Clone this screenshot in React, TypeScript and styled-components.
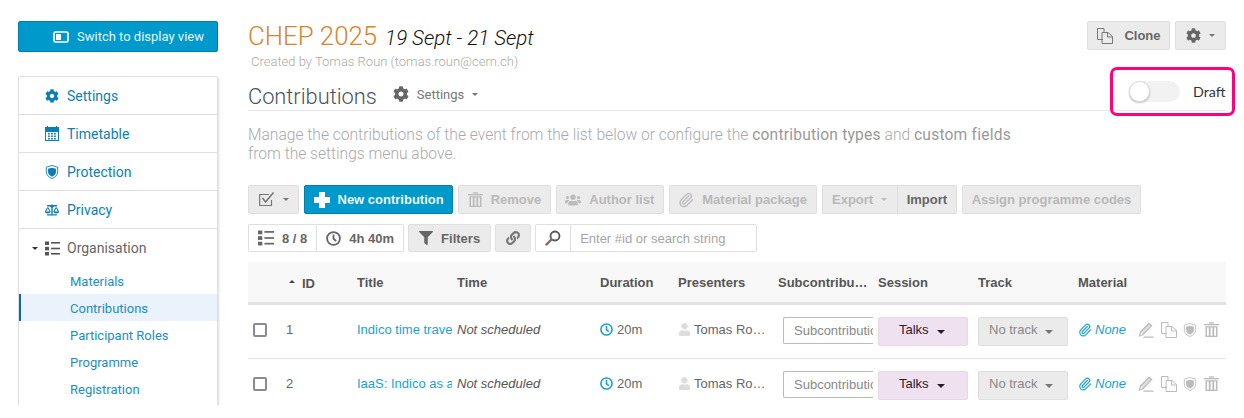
import React from "react";
import styled, { createGlobalStyle } from "styled-components";
import { FaBalanceScale, FaCog, FaFilter, FaLink, FaUser, FaUsers } from "react-icons/fa";

const GlobalStyle = createGlobalStyle`
  html, body {
    margin: 0;
    padding: 0;
    background: #fff;
    font-family: "Liberation Sans", Arial, sans-serif;
  }
`;

const BLUE = "#0b7fb5";
const LINK = "#1a9fd6";

function ShieldIcon({ size = 14, color = "currentColor" }: { size?: number; color?: string }) {
  return (
    <svg width={size} height={size} viewBox="0 0 16 16">
      <path d="M8 .5 14.500 2.500V8c0 3.600-3 6-6.500 7.500C4.500 14 1.500 11.600 1.500 8V2.500Z" fill="none" stroke={color} strokeWidth="1" />
      <path d="M8 3 12.500 4.300V8C12.500 10.500 10.500 12.200 8 13.300 5.500 12.200 3.500 10.500 3.500 8V4.300Z" fill={color} />
    </svg>
  );
}

function CalendarIcon() {
  return (
    <svg width="14" height="15" viewBox="0 0 14 15" fill={BLUE}>
      <path d="M0 1h2V0h1v1h8V0h1v1h2v14H0Zm1 5v8h12V6Z" />
      {[3, 6, 9].map((x) =>
        [7, 9.5, 12].map((y) => <rect key={`${x}-${y}`} x={x} y={y} width="1.800" height="1.500" />),
      )}
    </svg>
  );
}

function ListIcon({ size = 15, color = "#555" }: { size?: number; color?: string }) {
  return (
    <svg width={size} height={size} viewBox="0 0 15 15" fill={color}>
      <rect x="0" y="0.500" width="4" height="3.500" />
      <rect x="0" y="5.800" width="4" height="3.500" />
      <rect x="0" y="11" width="4" height="3.500" />
      <rect x="6" y="1" width="9" height="1.600" />
      <rect x="6" y="6.700" width="9" height="1.600" />
      <rect x="6" y="12" width="9" height="1.600" />
    </svg>
  );
}

function DisplayIcon() {
  return (
    <svg width="16" height="12" viewBox="0 0 16 12">
      <rect x="1" y="1" width="14" height="10" rx="1.500" fill="none" stroke="#fff" strokeWidth="1.700" />
      <rect x="3" y="3" width="5" height="6" fill="#fff" />
    </svg>
  );
}

function CopyIcon({ size = 16, color = "#777" }: { size?: number; color?: string }) {
  return (
    <svg width={size} height={size} viewBox="0 0 16 16" fill="none" stroke={color} strokeWidth="1">
      <path d="M6 11.500H.5V.5H7V4" />
      <path d="M5 4.500H11L15.500 8.500V15.500H5Z" />
      <path d="M10.500 4.500V9H15.500" />
    </svg>
  );
}

function TrashIcon({ size = 15, color = "#bbb" }: { size?: number; color?: string }) {
  return (
    <svg width={size} height={size} viewBox="0 0 15 15" fill={color}>
      <rect x="0" y="2" width="15" height="1.300" />
      <rect x="5" y="0.300" width="5" height="1.300" />
      <path d="M1.500 4.300h12V15h-12Zm1.500 1.200v8.300h1.800V5.500Zm3.600 0v8.300h1.800V5.500Zm3.600 0v8.300H12V5.500Z" fillRule="evenodd" />
    </svg>
  );
}

function ClockIcon({ size = 13, color = "#555" }: { size?: number; color?: string }) {
  return (
    <svg width={size} height={size} viewBox="0 0 14 14" fill="none" stroke={color} strokeWidth="1.700">
      <circle cx="7" cy="7" r="6" />
      <path d="M7 3.300V7.300L9.500 9.300" />
    </svg>
  );
}

function ClipIcon({ size = 14, color = "#bbb" }: { size?: number; color?: string }) {
  return (
    <svg width={size} height={size} viewBox="0 0 24 24" fill="none" stroke={color} strokeWidth="2" strokeLinecap="round" strokeLinejoin="round">
      <path d="m16 6-8.414 8.586a2 2 0 0 0 2.829 2.829l8.414-8.586a4 4 0 1 0-5.657-5.657l-8.379 8.551a6 6 0 1 0 8.485 8.485l8.379-8.551" />
    </svg>
  );
}

function EditIcon() {
  return (
    <svg width="17" height="16" viewBox="0 0 16 16" fill="#bbb">
      <path d="M11.500.5 15 3.500 6 13 1 15l1.500-5.500Zm0 1.800L3.600 10.200 2.800 13.200 5.400 12 13.300 3.700Z" fillRule="evenodd" />
      <path d="M7 14.500H16V15.700H5Z" />
      <path d="M3 10 11.500 1.500 14 3.500 5.500 12.500Z" opacity="0.500" />
    </svg>
  );
}

function SearchIcon() {
  return (
    <svg width="16" height="16" viewBox="0 0 16 16" fill="none">
      <circle cx="10" cy="6" r="4.500" stroke="#555" strokeWidth="1.800" />
      <path d="M6.500 9.500 1.500 14.500" stroke="#7a6a55" strokeWidth="2.400" strokeLinecap="round" />
    </svg>
  );
}

function CheckboxIcon() {
  return (
    <svg width="16" height="15" viewBox="0 0 16 15" fill="none" stroke="#777" strokeWidth="1.200">
      <path d="M12.500 8V13.500H.7V2.500H10" />
      <path d="M3.500 6 6.500 10 14.500 .5" strokeWidth="1.600" />
    </svg>
  );
}

const Page = styled.div`
  box-sizing: border-box;
  display: flex;
  gap: 30px;
  width: 1244px;
  height: 405px;
  padding: 21px 18px 0;
  overflow: hidden;
`;

const Sidebar = styled.aside`
  display: flex;
  flex-direction: column;
  flex: 0 0 200px;
  gap: 24px;

  & > * {
    flex-shrink: 0;
  }
`;

const SwitchButton = styled.div`
  box-sizing: border-box;
  display: flex;
  align-items: center;
  gap: 8px;
  height: 31px;
  padding-left: 34px;
  background: #0099cc;
  border: 1px solid #007fa9;
  border-radius: 2px;
  color: #e4f4fa;
  font: 13px Roboto, sans-serif;
`;

const Menu = styled.nav`
  border: 1px solid #dfdfdf;
  border-radius: 2px 2px 0 0;
  box-shadow: 1px 1px 2px #ddd;
  padding-bottom: 30px;
`;

const MenuItem = styled.div<{ $dark?: boolean }>`
  box-sizing: border-box;
  display: flex;
  align-items: center;
  gap: ${({ $dark }) => ($dark ? "7px" : "8px")};
  height: 38px;
  padding-left: 26px;
  border-bottom: ${({ $dark }) => ($dark ? "none" : "1px solid #dfdfdf")};
  color: ${({ $dark }) => ($dark ? "#666" : BLUE)};
  font: 14px Roboto, sans-serif;
`;

const Caret = styled.span<{ $color?: string; $size?: number }>`
  display: inline-block;
  width: 0;
  height: 0;
  border-left: ${({ $size = 3 }) => $size}px solid transparent;
  border-right: ${({ $size = 3 }) => $size}px solid transparent;
  border-top: ${({ $size = 3 }) => $size}px solid ${({ $color = "#333" }) => $color};
`;

const OrganisationCaret = styled(Caret)`
  margin-left: -13px;
`;

const SubItem = styled.div<{ $active?: boolean }>`
  box-sizing: border-box;
  display: flex;
  align-items: center;
  height: 27px;
  padding: 1px 0 0 ${({ $active }) => ($active ? "49px" : "51px")};
  background: ${({ $active }) => ($active ? "#eaf2fb" : "transparent")};
  border-left: ${({ $active }) => ($active ? "2px solid #0b6aa8" : "none")};
  color: #1a8fc4;
  font: 13px Roboto, sans-serif;
`;

const Main = styled.main`
  position: relative;
  flex: 0 0 978px;
  display: flex;
  flex-direction: column;

  & > * {
    flex-shrink: 0;
  }
`;

const TitleRow = styled.div`
  display: flex;
  justify-content: space-between;
`;

const EventTitle = styled.h1`
  margin: 0;
  font: 300 25.800px/31px Roboto, sans-serif;
  color: #d9832b;
`;

const EventDates = styled.em`
  margin-left: 8px;
  font: italic 300 20.500px Roboto, sans-serif;
  color: #111;
`;

const CreatedBy = styled.div`
  margin: 3px 0 0 3px;
  font: 300 13px/14px Roboto, sans-serif;
  color: #aaa;
`;

const TopActions = styled.div`
  display: flex;
  gap: 5px;
  height: 29px;
`;

const Button = styled.div<{ $muted?: boolean; $white?: boolean; $height?: number; $pad?: number }>`
  box-sizing: border-box;
  display: flex;
  align-items: center;
  gap: 8px;
  height: ${({ $height = 29 }) => $height}px;
  padding: 0 ${({ $pad = 8.5 }) => $pad}px;
  background: ${({ $white }) => ($white ? "#fff" : "#ebebeb")};
  border: 1px solid #dfdfdf;
  border-radius: 2px;
  color: ${({ $muted }) => ($muted ? "#b8b8b8" : "#666")};
  font: bold 13px "Liberation Sans", sans-serif;
  white-space: nowrap;
`;

const PrimaryButton = styled(Button)`
  background: #0099cc;
  border-color: #007fa9;
  color: #eaf7fb;
`;

const Joined = styled.div`
  display: flex;

  & > *:first-child {
    border-radius: 2px 0 0 2px;
    border-right: none;
  }
  & > *:last-child {
    border-radius: 0 2px 2px 0;
  }
`;

const SectionHeader = styled.div`
  box-sizing: border-box;
  display: flex;
  align-items: center;
  height: 33px;
  margin-top: 9px;
  padding-top: 5px;
  border-bottom: 1px solid #e8e8e8;
`;

const SectionTitle = styled.h2`
  margin: 0;
  font: 300 21.800px/27px Roboto, sans-serif;
  color: #4a5260;
`;

const SectionSettings = styled.div`
  display: flex;
  align-items: center;
  gap: 8px;
  margin: -5px 0 0 16px;
  font: 13px Roboto, sans-serif;
  color: #777;
`;

const DraftOverlay = styled.div`
  position: absolute;
  top: 46px;
  left: 862px;
  box-sizing: border-box;
  display: flex;
  align-items: center;
  gap: 13px;
  width: 125px;
  height: 49px;
  padding-left: 15px;
  border: 3px solid #ff0080;
  border-radius: 7px;
  font: 14.300px Lato, sans-serif;
  color: #333;
`;

const Toggle = styled.div`
  position: relative;
  flex: 0 0 51px;
  height: 21px;
  margin-left: 1px;
  border-radius: 11px;
  background: #f2f2f2;
`;

const ToggleKnob = styled.div`
  position: absolute;
  top: 0;
  left: 0;
  box-sizing: border-box;
  width: 21px;
  height: 21px;
  border-radius: 50%;
  background: #fff;
  border: 1px solid #ddd;
  box-shadow: 0 1px 2px #bbb;
`;

const Intro = styled.p`
  width: 770px;
  margin: 15px 0 0;
  font: 300 15.600px/19px Roboto, sans-serif;
  color: #a9a9ae;

  strong {
    font-weight: 400;
    letter-spacing: 0.2px;
    color: #999;
  }
`;

const Toolbar = styled.div`
  display: flex;
  gap: 5px;
  margin-top: 21px;
`;

const FilterBar = styled(Toolbar)`
  gap: 4px;
  margin-top: 10px;
`;

const SearchBox = styled.div`
  box-sizing: border-box;
  display: flex;
  width: 222px;
  height: 28px;
  border: 1px solid #dfdfdf;
  border-radius: 2px;
`;

const SearchAddon = styled.div`
  display: flex;
  align-items: center;
  justify-content: center;
  width: 34px;
  border-right: 1px solid #dfdfdf;
`;

const SearchHint = styled.div`
  display: flex;
  align-items: center;
  padding-left: 9px;
  font: 13px "Liberation Sans", sans-serif;
  color: #a5a5a5;
`;

const COLUMNS = "30px 79px 100px 143px 78px 100px 100px 100px 100px 148px";

const HeadRow = styled.div`
  box-sizing: border-box;
  display: grid;
  grid-template-columns: ${COLUMNS};
  align-items: center;
  height: 43px;
  margin-top: 10px;
  background: #f8f8f8;
  border-bottom: 3px solid #e2e2e2;
  font: bold 13px "Liberation Sans", sans-serif;
  color: #555;
`;

const SortCell = styled.div`
  display: flex;
  align-items: center;
  gap: 7px;
  padding: 2px 0 0 11px;
`;

const SortCaret = styled.span`
  width: 0;
  height: 0;
  margin-top: -3px;
  border-left: 3px solid transparent;
  border-right: 3px solid transparent;
  border-bottom: 3px solid #444;
`;

const Row = styled.div`
  box-sizing: border-box;
  display: grid;
  grid-template-columns: ${COLUMNS};
  align-items: center;
  height: 54px;
  padding-bottom: 4px;
  border-bottom: 1px solid #e2e2e2;
  font: 13px "Liberation Sans", sans-serif;
  color: #666;
`;

const CheckCell = styled.div`
  padding-left: 5px;
  display: flex;
`;

const Check = styled.span`
  box-sizing: border-box;
  width: 14px;
  height: 14px;
  background: #fff;
  border: 2px solid #8a8a98;
  border-radius: 2px;
`;

const IdCell = styled.div`
  padding-left: 8px;
`;

const TitleCell = styled.div`
  width: 95px;
  overflow: hidden;
  white-space: nowrap;
  color: ${LINK};
`;

const Unscheduled = styled.div`
  font-style: italic;
  white-space: nowrap;
  color: #555;
`;

const InlineCell = styled.div`
  display: flex;
  align-items: center;
  gap: 4px;
  white-space: nowrap;
`;

const PresenterCell = styled(InlineCell)`
  gap: 3px;
`;

const SubInput = styled.div`
  box-sizing: border-box;
  width: 90px;
  height: 27px;
  margin: 2px 0 0 5px;
  padding: 5px 0 0 10px;
  overflow: hidden;
  white-space: nowrap;
  background: #fff;
  border: 1px solid #bbb;
  border-right: none;
  border-radius: 2px 0 0 2px;
  font-size: 13px;
  color: #888;
`;

const Select = styled.div<{ $bg: string; $color: string }>`
  box-sizing: border-box;
  display: flex;
  align-items: center;
  gap: 8px;
  width: 90px;
  height: 29px;
  margin-top: 4px;
  padding: 0 0 5px ${({ $color }) => ($color === "#888" ? "10px" : "20px")};
  background: ${({ $bg }) => $bg};
  border: 1px solid ${({ $bg }) => ($bg === "#ebebeb" ? "#dedede" : "#e6dae8")};
  border-radius: 2px;
  color: ${({ $color }) => $color};
`;

const SelectCaret = styled(Caret)`
  margin-top: 6px;
`;

const MaterialLink = styled(InlineCell)`
  gap: 3px;
  color: ${LINK};
  font-style: italic;
`;

const RowActions = styled.div`
  display: flex;
  align-items: center;
  gap: 6.500px;
  margin-left: 11px;
`;

const MaterialCell = styled.div`
  display: flex;
  align-items: center;
`;

const rows = [
  { id: 1, title: "Indico time travel" },
  { id: 2, title: "IaaS: Indico as a Service" },
];

export default function App() {
  return (
    <>
      <GlobalStyle />
      <Page>
        <Sidebar>
          <SwitchButton>
            <DisplayIcon />
            Switch to display view
          </SwitchButton>
          <Menu>
            <MenuItem>
              <FaCog size={14} /> Settings
            </MenuItem>
            <MenuItem>
              <CalendarIcon /> Timetable
            </MenuItem>
            <MenuItem>
              <ShieldIcon size={14} /> Protection
            </MenuItem>
            <MenuItem>
              <FaBalanceScale size={14} /> Privacy
            </MenuItem>
            <MenuItem $dark>
              <OrganisationCaret /> <ListIcon /> Organisation
            </MenuItem>
            <SubItem>Materials</SubItem>
            <SubItem $active>Contributions</SubItem>
            <SubItem>Participant Roles</SubItem>
            <SubItem>Programme</SubItem>
            <SubItem>Registration</SubItem>
          </Menu>
        </Sidebar>

        <Main>
          <TitleRow>
            <div>
              <EventTitle>
                CHEP 2025<EventDates>19 Sept - 21 Sept</EventDates>
              </EventTitle>
              <CreatedBy>Created by Tomas Roun (tomas.roun@cern.ch)</CreatedBy>
            </div>
            <TopActions>
              <Button>
                <CopyIcon size={16} />
                &nbsp;Clone
              </Button>
              <Button $pad={10}>
                <FaCog size={15} color="#666" />
                <Caret $color="#777" />
              </Button>
            </TopActions>
          </TitleRow>

          <SectionHeader>
            <SectionTitle>Contributions</SectionTitle>
            <SectionSettings>
              <FaCog size={16} color="#666" />
              Settings
              <Caret $color="#777" />
            </SectionSettings>
          </SectionHeader>
          <DraftOverlay>
            <Toggle>
              <ToggleKnob />
            </Toggle>
            Draft
          </DraftOverlay>

          <Intro>
            Manage the contributions of the event from the list below or configure the{" "}
            <strong>contribution types</strong> and <strong>custom fields</strong> from the settings menu above.
          </Intro>

          <Toolbar>
            <Button $pad={9.5}>
              <CheckboxIcon />
              <Caret $color="#777" />
            </Button>
            <PrimaryButton>
              <svg width="16" height="16" viewBox="0 0 16 16" fill="#fff">
                <path d="M5 0h6v5h5v6h-5v5H5v-5H0V5h5Z" />
              </svg>
              New contribution
            </PrimaryButton>
            <Button $muted>
              <TrashIcon size={15} />
              Remove
            </Button>
            <Button $muted>
              <FaUsers size={16} color="#bbb" />
              Author list
            </Button>
            <Button $muted>
              <ClipIcon size={16} />
              Material package
            </Button>
            <Joined>
              <Button $muted $pad={9.5}>
                Export
                <Caret $color="#bbb" />
              </Button>
              <Button $pad={9}>Import</Button>
            </Joined>
            <Button $muted>Assign programme codes</Button>
          </Toolbar>

          <FilterBar>
            <Joined>
              <Button $white $height={28} $pad={9}>
                <ListIcon size={16} color="#666" />
                8 / 8
              </Button>
              <Button $white $height={28} $pad={9}>
                <ClockIcon size={15} color="#666" />
                4h 40m
              </Button>
            </Joined>
            <Button $height={28} $pad={10}>
              <FaFilter size={14} color="#666" />
              Filters
            </Button>
            <Button $height={28} $pad={10}>
              <FaLink size={14} color="#777" />
            </Button>
            <SearchBox>
              <SearchAddon>
                <SearchIcon />
              </SearchAddon>
              <SearchHint>Enter #id or search string</SearchHint>
            </SearchBox>
          </FilterBar>

          <HeadRow>
            <div />
            <SortCell>
              <SortCaret />
              ID
            </SortCell>
            <div>Title</div>
            <div>Time</div>
            <div>Duration</div>
            <div>Presenters</div>
            <div>Subcontribu…</div>
            <div>Session</div>
            <div>Track</div>
            <div>Material</div>
          </HeadRow>

          {rows.map((row) => (
            <Row key={row.id}>
              <CheckCell>
                <Check />
              </CheckCell>
              <IdCell>{row.id}</IdCell>
              <TitleCell>{row.title}</TitleCell>
              <Unscheduled>Not scheduled</Unscheduled>
              <InlineCell>
                <ClockIcon size={13} color={LINK} />
                20m
              </InlineCell>
              <PresenterCell>
                <FaUser size={13} color="#ddd" />
                Tomas Ro…
              </PresenterCell>
              <SubInput>Subcontribution</SubInput>
              <Select $bg="#efe1f0" $color="#2a1a2e">
                Talks
                <SelectCaret $color="#2a1a2e" $size={4} />
              </Select>
              <Select $bg="#ebebeb" $color="#888">
                No track
                <SelectCaret $color="#777" $size={4} />
              </Select>
              <MaterialCell>
                <MaterialLink>
                  <ClipIcon size={14} color={LINK} />
                  None
                </MaterialLink>
                <RowActions>
                  <EditIcon />
                  <CopyIcon size={16} color="#bbb" />
                  <ShieldIcon size={14} color="#bbb" />
                  <TrashIcon size={15} />
                </RowActions>
              </MaterialCell>
            </Row>
          ))}
        </Main>
      </Page>
    </>
  );
}
